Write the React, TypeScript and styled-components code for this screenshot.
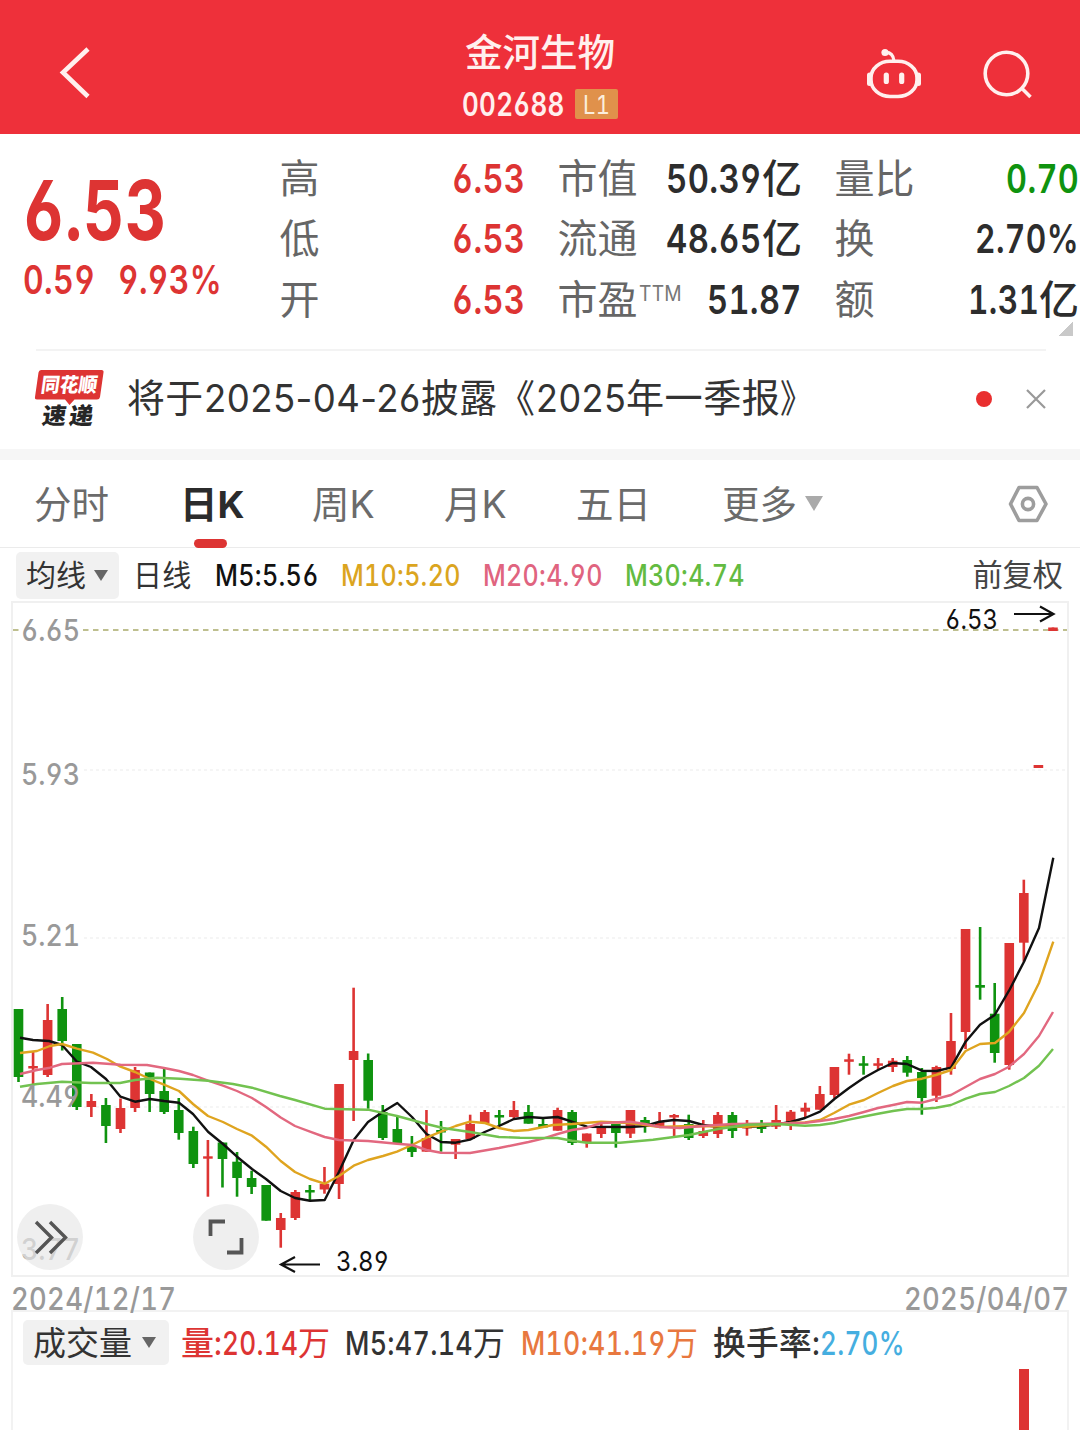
import React, { useLayoutEffect, useRef, useState } from 'react';
import styled, { createGlobalStyle } from 'styled-components';

const FONT = 'Inter, "Noto Sans CJK SC", sans-serif';
const RED = '#dd3433';
const GREEN = '#0f930f';

const Global = createGlobalStyle`
  html, body { margin: 0; padding: 0; background: #fff; }
  body { width: 1080px; height: 1430px; overflow: hidden; }
  * { box-sizing: border-box; }
  #root, button, text {
    font-family: ${FONT};
    font-feature-settings: "cv03", "cv04", "tnum";
  }
`;

/* Text squeezed to the narrow width of a DIN-like face. */
const FitBox = styled.span<{ $w: number; $weight?: number }>`
  display: block;
  flex: none;
  width: ${(p) => p.$w}px;
  white-space: nowrap;
  ${(p) => (p.$weight ? `font-weight: ${p.$weight};` : '')}
`;
const FitText = styled.span`
  display: block;
  width: max-content;
  transform-origin: left center;
  letter-spacing: 0.012em;
`;
function Fit({ w, weight, children }: { w: number; weight?: number; children: string }) {
  const ref = useRef<HTMLSpanElement>(null);
  const [scale, setScale] = useState(1);
  useLayoutEffect(() => {
    if (ref.current) setScale(w / ref.current.offsetWidth);
  }, [w, children]);
  return (
    <FitBox $w={w} $weight={weight}>
      <FitText ref={ref} style={{ transform: `scaleX(${scale})` }}>{children}</FitText>
    </FitBox>
  );
}

type Seg = [string, number, number?];
const Segs = ({ items }: { items: Seg[] }) => (
  <>
    {items.map(([t, w, weight], i) => (
      <Fit key={i} w={w} weight={weight}>{t}</Fit>
    ))}
  </>
);

const Page = styled.div`
  width: 1080px;
  height: 1430px;
  overflow: hidden;
  display: flex;
  flex-direction: column;
  background: #fff;
  color: #333;
`;

/* ---------- header ---------- */
const Header = styled.header`
  flex: none;
  height: 133.5px;
  display: grid;
  grid-template-columns: 300px 1fr 300px;
  background: #ee303a;
  color: #fff0ee;
`;
const HeaderSide = styled.div<{ $end?: boolean }>`
  display: flex;
  align-items: flex-start;
  justify-content: ${(p) => (p.$end ? 'flex-end' : 'flex-start')};
  gap: 56px;
  padding: ${(p) => (p.$end ? '44px 44px 0 0' : '42px 0 0 56px')};
`;
const TitleBlock = styled.div`
  display: flex;
  flex-direction: column;
  align-items: center;
  padding-top: 28px;
`;
const StockName = styled.div`
  font-size: 37.5px;
  line-height: 50px;
  font-weight: 500;
`;
const CodeRow = styled.div`
  display: flex;
  align-items: center;
  gap: 10px;
  height: 52px;
  font-size: 32.5px;
  font-weight: 600;
`;
const LevelBadge = styled.span`
  display: flex;
  align-items: center;
  justify-content: center;
  width: 43px;
  height: 30px;
  border-radius: 2px;
  background: #e0914b;
  color: #fbeedd;
  font-size: 26px;
  font-weight: 400;
`;

/* ---------- quote ---------- */
const Quote = styled.section`
  position: relative;
  flex: none;
  height: 215.5px;
  padding: 15.5px 0 0 23px;
  display: grid;
  grid-template-columns: 224px 246px 245px 245px;
  column-gap: 32px;
`;
const PriceBlock = styled.div`
  display: flex;
  flex-direction: column;
  color: ${RED};
`;
const Price = styled.div`
  padding-top: 21px;
  height: 103px;
  line-height: 82px;
  font-size: 82px;
  font-weight: 700;
`;
const Change = styled.div`
  display: flex;
  gap: 23px;
  height: 56px;
  line-height: 56px;
  font-size: 40px;
  font-weight: 600;
`;
const StatColumn = styled.div`
  display: flex;
  flex-direction: column;
`;
const Stat = styled.div`
  display: flex;
  justify-content: space-between;
  height: 60.3px;
  line-height: 60px;
  font-size: 40px;
`;
const StatLabel = styled.span`
  display: flex;
  padding-left: 0.5px;
  color: #666;
  font-weight: 400;
  line-height: 60px;
`;
const Sup = styled.span`
  font-size: 21px;
  line-height: 47px;
  padding-left: 1px;
  color: #777;
`;
const StatValue = styled.span<{ $c?: string }>`
  display: flex;
  color: ${(p) => p.$c || '#2d2d2d'};
  font-weight: 600;
`;
const Corner = styled.i`
  position: absolute;
  right: 7px;
  bottom: 13px;
  width: 14px;
  height: 14px;
  background: linear-gradient(135deg, transparent 50%, #c9c9c9 50%);
`;

/* ---------- news ---------- */
const News = styled.section`
  flex: none;
  height: 100px;
  margin: 0 34px 0 36px;
  padding-bottom: 3px;
  border-top: 2px solid #f3f3f3;
  display: flex;
  align-items: center;
  font-size: 38.4px;
`;
const LogoWrap = styled.div`
  width: 93px;
  height: 66px;
  margin-left: -2px;
  flex: none;
`;
const NewsText = styled.div`
  flex: 1;
  display: flex;
  line-height: 51px;
  font-feature-settings: "cv03", "cv04";
`;
const Dot = styled.i`
  width: 16px;
  height: 16px;
  border-radius: 50%;
  background: #e92f2f;
  margin-right: 34px;
`;
const Band = styled.div`
  flex: none;
  height: 11px;
  background: #f6f6f6;
`;

/* ---------- tabs ---------- */
const Tabs = styled.nav`
  flex: none;
  height: 88px;
  display: flex;
  align-items: stretch;
  padding: 0 32px 0 34px;
  border-bottom: 1.5px solid #ebebeb;
`;
const Tab = styled.div<{ $w: number; $on?: boolean }>`
  width: ${(p) => p.$w}px;
  display: flex;
  align-items: flex-start;
  gap: 8px;
  font-size: 37.5px;
  line-height: 90px;
  color: ${(p) => (p.$on ? '#2b2b2b' : '#6b6b6b')};
  font-weight: ${(p) => (p.$on ? 700 : 400)};
  position: relative;
`;
const Underline = styled.i`
  position: absolute;
  left: 13.5px;
  bottom: -1px;
  width: 33px;
  height: 9px;
  border-radius: 5px;
  background: ${RED};
`;
const Caret = styled.i<{ $s: number; $h: number; $c: string }>`
  align-self: center;
  width: 0;
  height: 0;
  border: ${(p) => p.$s}px solid transparent;
  border-top: ${(p) => p.$h}px solid ${(p) => p.$c};
  border-bottom: 0;
`;
const Push = styled.div`
  margin-left: auto;
  display: flex;
  align-items: center;
`;

/* ---------- indicator rows ---------- */
const MaRow = styled.div`
  flex: none;
  height: 53px;
  display: flex;
  align-items: center;
  padding: 1px 17px 0 16px;
  font-size: 30px;
`;
const Chip = styled.div<{ $w: number; $h: number; $pr: number }>`
  width: ${(p) => p.$w}px;
  height: ${(p) => p.$h}px;
  flex: none;
  display: flex;
  align-items: center;
  justify-content: space-between;
  padding: 0 ${(p) => p.$pr}px 0 10px;
  border-radius: 5px;
  background: #f1f1f1;
  color: #333;
  font-weight: 400;
`;
const Ma = styled.span<{ $c: string; $ml: number; $weight?: number }>`
  display: flex;
  margin-left: ${(p) => p.$ml}px;
  color: ${(p) => p.$c};
  line-height: 40px;
  font-weight: ${(p) => p.$weight || 550};
`;
const Label = styled.span`
  line-height: 44px;
`;
const Adjust = styled.span`
  margin-left: auto;
  font-size: 30.2px;
  line-height: 44px;
  font-weight: 400;
  color: #444;
`;

/* ---------- chart ---------- */
const ChartArea = styled.section`
  position: relative;
  flex: none;
  height: 676px;
`;
const ChartSvg = styled.svg`
  display: block;
`;
const RoundButton = styled.button<{ $x: number }>`
  position: absolute;
  left: ${(p) => p.$x}px;
  top: 603px;
  width: 66px;
  height: 66px;
  padding: 0;
  border: 0;
  border-radius: 50%;
  background: rgba(232, 232, 232, 0.7);
`;
const Dates = styled.div`
  flex: none;
  height: 33px;
  display: flex;
  justify-content: space-between;
  padding: 0 11px;
  font-size: 31px;
  font-weight: 500;
  line-height: 44px;
  color: #999;
`;
const Volume = styled.section`
  flex: 1;
  margin: 0 11px;
  border: 2px solid #f2f2f2;
  border-bottom: 0;
  display: flex;
  flex-direction: column;
`;
const VolumeRow = styled.div`
  display: flex;
  align-items: center;
  flex: none;
  height: 45px;
  margin-top: 8px;
  padding-left: 10px;
  font-size: 33px;
`;
const VolumeBars = styled.div`
  flex: 1;
  display: flex;
  justify-content: flex-end;
  padding: 4px 38px 0 0;
`;
const VolumeBar = styled.i`
  width: 10px;
  background: ${RED};
`;

/* up?, body top, body bottom, wick top, wick bottom */
type Candle = [0 | 1, number, number, number, number];
const candles: Candle[] = [
  [0, 1009, 1077, 1009, 1082], [1, 1066, 1068.5, 1052, 1085], [1, 1020, 1075, 1004, 1077], [0, 1009, 1041, 997, 1050.5],
  [0, 1044, 1107, 1044, 1110], [1, 1101, 1107, 1094, 1117], [0, 1105, 1126, 1098, 1143], [1, 1108, 1129, 1098.5, 1133],
  [1, 1070, 1108, 1067, 1112], [0, 1072.5, 1094, 1072.5, 1112], [0, 1091, 1112, 1068.5, 1114], [0, 1110, 1133, 1098, 1139.7],
  [0, 1131, 1164, 1126.7, 1168], [1, 1156.3, 1158.7, 1140, 1196.7], [0, 1142.5, 1159, 1142.5, 1187.5], [0, 1161.7, 1178, 1152, 1196.7],
  [0, 1178, 1187, 1170.7, 1194], [0, 1185, 1220.7, 1185, 1220.7], [1, 1218, 1230, 1213, 1247.7], [1, 1192, 1218, 1190, 1220],
  [0, 1190, 1192.5, 1185, 1200], [1, 1183.7, 1189.5, 1167, 1193.7], [1, 1084, 1184, 1084, 1199], [1, 1051, 1060, 987.7, 1121],
  [0, 1060, 1100.7, 1053.5, 1108.7], [0, 1112, 1138, 1105, 1140], [0, 1129, 1144, 1117, 1144], [0, 1145.7, 1152, 1136, 1157],
  [1, 1138, 1151.7, 1110, 1151.7], [0, 1130, 1132.5, 1121, 1151.7], [1, 1139, 1144.7, 1139, 1159], [1, 1124, 1139, 1114.7, 1139],
  [1, 1112, 1123, 1110, 1123], [0, 1115, 1117.5, 1110, 1125], [1, 1110, 1117, 1101, 1119], [0, 1112, 1123.7, 1105, 1123.7],
  [0, 1124, 1127.5, 1118, 1127.5], [1, 1110, 1130.7, 1107.7, 1130.7], [0, 1112, 1143, 1110, 1145], [1, 1133.5, 1143, 1133.5, 1147.7],
  [1, 1126.7, 1134, 1122, 1138], [0, 1124, 1133, 1124, 1147.7], [1, 1110, 1133.7, 1110, 1138], [0, 1120, 1126.7, 1117, 1132.7],
  [1, 1122, 1127, 1112, 1128], [1, 1115, 1117.5, 1114, 1136], [0, 1124, 1138, 1114.7, 1140], [1, 1131, 1136, 1120, 1138],
  [1, 1115, 1134, 1112, 1138], [0, 1115, 1131, 1112, 1138], [1, 1126, 1128.5, 1120, 1135.7], [0, 1124, 1129, 1120, 1133],
  [1, 1120, 1126.7, 1105, 1129], [1, 1111.7, 1124, 1110, 1130], [1, 1107.7, 1111.7, 1102.7, 1117.7], [1, 1094, 1109.7, 1086, 1109.7],
  [1, 1067, 1095, 1067, 1098], [1, 1059.3, 1061.8, 1053.7, 1074.7], [0, 1063.3, 1065.8, 1056, 1074.7], [1, 1063.3, 1065.8, 1058, 1069.7],
  [1, 1060.7, 1067, 1058, 1072], [0, 1060, 1072.7, 1056, 1076.7], [0, 1072, 1098, 1068, 1114.7], [1, 1067, 1095.7, 1065.7, 1102],
  [1, 1041, 1069, 1013, 1074.7], [1, 929, 1032, 929, 1049], [0, 985, 987.7, 927, 999.7], [0, 1013.7, 1053, 983, 1062.7],
  [1, 943, 1065, 943, 1069.7], [1, 893, 942.7, 879.7, 961.7], [1, 765, 768, 765, 768], [1, 627.5, 631, 627.5, 631],
];

const MA5 = '20,1037.7 33,1040 49,1041 62,1045 77,1061.7 91,1067 106,1079 120.5,1096.7 135,1101.7 150,1099 164,1101 179,1102.7 193,1114 208,1131.7 223,1144 237,1156.7 252,1169 266,1179 280.7,1191 295,1198 310,1200.7 324.7,1200 339,1171.7 353.7,1140 368,1122 383,1111.7 397.3,1103 412,1117 426.5,1134 441,1142 455.6,1142.7 470,1139.7 484.7,1132 499,1126 514,1119 528.5,1117 543,1118 557.6,1117 572,1121.7 587,1126.7 630,1127 645,1126 659.6,1121.7 674,1120 689,1121 703,1125 718,1126.7 732,1126 747,1127 761.6,1126 776,1124.5 790.7,1122 805,1118 820,1111.7 834.4,1099 849,1088 863.6,1078 878,1070 892.7,1063 907,1064 922,1070.7 936.4,1071 951,1067.7 965.6,1041.7 980,1024.7 994.7,1015 1009,990.7 1024,961.7 1039,928 1053.3,857.7';
const MA10 = '20,1053 37,1051 50,1046 62,1044 77,1048.7 93,1052.7 107,1059 120.5,1066.7 135,1072 150,1079 164,1084.7 179,1091 193,1104 208,1116 223,1122 237,1129 252,1135.7 266,1146.7 280.7,1161 295,1172 310,1179 324.7,1183.7 339,1176 353.7,1165.7 368,1160 383,1156 397,1151.7 412,1145 426.5,1137.7 441,1131.7 455.6,1126 470,1121.7 485,1123 499,1128 514,1131 528.5,1130 553,1125 572,1124 601,1121.7 630,1123 660,1127 689,1126 747,1126.7 791,1123 805,1122.5 820,1120 834,1113 849,1104.7 864,1100 878,1093 893,1086 907,1081 922,1078.7 936,1075 951,1070 965.6,1051 980,1044 995,1043 1009,1032 1024,1013 1039,983 1053.3,941.7';
const MA20 = '20,1074 37,1070 50,1067.7 62,1064 93,1062.7 120.5,1064.7 147,1065 164,1068 179,1071 193,1075 208,1080.7 223,1085.7 237,1091 252,1098 266,1107 280.7,1117.5 295,1126 310,1131.7 324.7,1137 339,1140 368,1141 397,1143.7 412,1145 426.5,1150 441,1152.7 470,1153 499,1148 528.5,1142 543,1138.7 557.6,1134 572,1130 587,1127.7 601,1123 630,1121.7 645,1124 660,1127 680,1128 703,1126 732,1124 780,1123.5 805,1122.7 820,1121 834,1119 849,1116 864,1112 878,1108 893,1105 907,1102 922,1102.7 936,1099 951,1095 966,1086.7 980,1079 995,1074 1009,1066.7 1024,1054 1039,1036 1053,1012';
const MA30 = '20,1086.7 37,1084 62,1081.7 91,1083 120,1083 135,1080 157,1077.7 180,1078.7 208,1080.7 233,1084 252,1087.7 280,1096 295,1100 324.7,1108.7 368,1109.7 397,1116 426.5,1124 443,1128 470,1132 499,1137 520,1137.7 557.6,1138 572,1140.7 587,1142.7 620,1142.7 653,1139.7 689,1135 718,1129 747,1124.7 776,1124 805,1125.7 820,1125 834,1123 849,1119.7 864,1116.5 878,1113.7 893,1111 907,1109 922,1109 936,1107.7 951,1105 966,1098.7 980,1094 995,1092 1009,1086 1024,1078 1039,1065.7 1053,1049';

const axis: [string, number][] = [['6.65', 629.5], ['5.93', 774], ['5.21', 935], ['4.49', 1096], ['3.77', 1249]];

function KChart() {
  return (
    <ChartSvg width="1080" height="676" viewBox="0 601 1080 676">
      <rect x="12" y="602" width="1056" height="674" fill="none" stroke="#f0f0f0" strokeWidth="2" />
      {[770, 938, 1107].map((y) => (
        <line key={y} x1="84" x2="1067" y1={y} y2={y} stroke="#ececec" strokeWidth="1.2" strokeDasharray="3 3" />
      ))}
      <line x1="13" x2="1067" y1="630" y2="630" stroke="#a9aa6b" strokeWidth="1.4" strokeDasharray="5.5 4.5" />
      {candles.map(([up, bt, bb, wt, wb], i) => {
        const x = 18.5 + i * 14.57;
        const c = up ? RED : GREEN;
        return (
          <g key={i} fill={c}>
            <rect x={x - 1.3} y={wt} width="2.6" height={wb - wt} />
            <rect x={x - 4.8} y={bt} width="9.6" height={bb - bt} />
          </g>
        );
      })}
      <g fill="none" strokeWidth="2.4" strokeLinejoin="round">
        <polyline points={MA5} stroke="#111" />
        <polyline points={MA10} stroke="#dfa41f" />
        <polyline points={MA20} stroke="#e2687f" />
        <polyline points={MA30} stroke="#72c250" />
      </g>
      {axis.map(([t, y]) => (
        <g key={t}>
          {t === '6.65' && <rect x="22" y="616" width="59" height="28" fill="#fff" />}
          <text x="21" y={y + 11} fontSize="30" fontWeight="500" fill="#999" textLength="59" lengthAdjust="spacingAndGlyphs">{t}</text>
        </g>
      ))}
      <g fontSize="27" fontWeight="400" fill="#111">
        <text x="945" y="629" textLength="53" lengthAdjust="spacingAndGlyphs">6.53</text>
        <text x="336" y="1271" textLength="53" lengthAdjust="spacingAndGlyphs">3.89</text>
      </g>
      <g fill="none" stroke="#111" strokeWidth="2.2">
        <path d="M1014 614H1053M1040 606.5L1053.5 614L1040 621.5" />
        <path d="M320 1264.500H281.500M295 1257L281 1264.500L295 1272" />
      </g>
    </ChartSvg>
  );
}

const Logo = () => (
  <svg width="80" height="66" viewBox="34 366 80 66">
    <path d="M41 370H101.500Q104 370 103.500 372.500L100 397Q99.500 399.500 97 399.500H74.500L69.500 405L65 399.500H37Q34.500 399.500 35 397L38.500 372.500Q39 370 41 370Z" fill={RED} />
    <g fontWeight="900" transform="skewX(-8)">
      <text x="95.500" y="392.500" fontSize="20" fill="#fff" textLength="56" lengthAdjust="spacingAndGlyphs">同花顺</text>
      <text x="101" y="424.500" fontSize="23" fill="#262626" textLength="24" lengthAdjust="spacingAndGlyphs">速</text>
      <text x="128" y="424.500" fontSize="23" fill="#262626" textLength="24" lengthAdjust="spacingAndGlyphs">递</text>
    </g>
  </svg>
);

export default function App() {
  return (
    <>
      <Global />
      <Page>
        <Header>
          <HeaderSide>
            <svg width="40" height="62" viewBox="56 42 40 62" fill="none" stroke="currentColor" strokeWidth="4.6">
              <path d="M88 49L63 72.500L88 96.500" />
            </svg>
          </HeaderSide>
          <TitleBlock>
            <StockName>金河生物</StockName>
            <CodeRow>
              <Fit w={103}>002688</Fit>
              <LevelBadge><Fit w={27}>L1</Fit></LevelBadge>
            </CodeRow>
          </TitleBlock>
          <HeaderSide $end>
            <svg width="60" height="60" viewBox="864 44 60 60" fill="none" stroke="currentColor" strokeWidth="3.6">
              <rect x="871" y="61.300" width="46" height="35.200" rx="19" ry="16.500" />
              <path d="M869.500 75V83.500M918.500 75V83.500" strokeWidth="5" strokeLinecap="round" />
              <path d="M885 52.500Q893 52 894 61" strokeWidth="3.200" />
              <circle cx="885" cy="52.500" r="3.600" fill="currentColor" stroke="none" />
              <path d="M886.300 75V81.500M901.700 75V81.500" strokeWidth="5.200" strokeLinecap="round" />
            </svg>
            <svg width="56" height="60" viewBox="980 44 56 60" fill="none" stroke="currentColor" strokeWidth="3.6">
              <circle cx="1006.500" cy="73.500" r="21.300" />
              <path d="M1022 88.500L1030.500 97" />
            </svg>
          </HeaderSide>
        </Header>

        <Quote>
          <PriceBlock>
            <Price><Fit w={144}>6.53</Fit></Price>
            <Change><Fit w={72}>0.59</Fit><Fit w={104}>9.93%</Fit></Change>
          </PriceBlock>
          <StatColumn>
            {['高', '低', '开'].map((l) => (
              <Stat key={l}>
                <StatLabel>{l}</StatLabel>
                <StatValue $c={RED}><Fit w={73}>6.53</Fit></StatValue>
              </Stat>
            ))}
          </StatColumn>
          <StatColumn>
            <Stat><StatLabel>市值</StatLabel><StatValue><Segs items={[['50.39', 96], ['亿', 40, 500]]} /></StatValue></Stat>
            <Stat><StatLabel>流通</StatLabel><StatValue><Segs items={[['48.65', 96], ['亿', 40, 500]]} /></StatValue></Stat>
            <Stat><StatLabel>市盈<Sup><Fit w={43}>TTM</Fit></Sup></StatLabel><StatValue><Fit w={95}>51.87</Fit></StatValue></Stat>
          </StatColumn>
          <StatColumn>
            <Stat><StatLabel>量比</StatLabel><StatValue $c={GREEN}><Fit w={73}>0.70</Fit></StatValue></Stat>
            <Stat><StatLabel>换</StatLabel><StatValue><Fit w={104}>2.70%</Fit></StatValue></Stat>
            <Stat><StatLabel>额</StatLabel><StatValue><Segs items={[['1.31', 71], ['亿', 40, 500]]} /></StatValue></Stat>
          </StatColumn>
          <Corner />
        </Quote>

        <News>
          <LogoWrap><Logo /></LogoWrap>
          <NewsText>
            <Segs items={[['将于', 77], ['2025-04-26', 217], ['披露《', 115], ['2025', 90], ['年一季报', 154], ['》', 33]]} />
          </NewsText>
          <Dot />
          <svg width="20" height="20" viewBox="0 0 20 20" stroke="#999" strokeWidth="2.2">
            <path d="M1 1L19 19M19 1L1 19" />
          </svg>
        </News>
        <Band />

        <Tabs>
          <Tab $w={146}>分时</Tab>
          <Tab $w={132} $on>日K<Underline /></Tab>
          <Tab $w={132}>周K</Tab>
          <Tab $w={132}>月K</Tab>
          <Tab $w={146}>五日</Tab>
          <Tab $w={120}>更多<Caret $s={9} $h={15} $c="#aaa" /></Tab>
          <Push>
            <svg width="40" height="40" viewBox="1007.500 484 40 40" fill="none" stroke="#9d9d9d" strokeWidth="3.6">
              <path d="M1018.500 487.500H1036.500L1045.500 504L1036.500 520.500H1018.500L1010 504Z" strokeLinejoin="round" />
              <circle cx="1027.500" cy="504" r="5.600" />
            </svg>
          </Push>
        </Tabs>

        <MaRow>
          <Chip $w={103} $h={47} $pr={11}><Label>均线</Label><Caret $s={7.5} $h={11} $c="#666" /></Chip>
          <Ma $c="#333" $ml={14} $weight={400}><Fit w={59}>日线</Fit></Ma>
          <Ma $c="#111" $ml={23}><Fit w={104}>M5:5.56</Fit></Ma>
          <Ma $c="#dba51f" $ml={22}><Fit w={120}>M10:5.20</Fit></Ma>
          <Ma $c="#e0647f" $ml={22}><Fit w={120}>M20:4.90</Fit></Ma>
          <Ma $c="#63bb41" $ml={22}><Fit w={120}>M30:4.74</Fit></Ma>
          <Adjust>前复权</Adjust>
        </MaRow>

        <ChartArea>
          <KChart />
          <RoundButton $x={17} aria-label="expand">
            <svg width="66" height="66" viewBox="17 1204 66 66" fill="none" stroke="#555" strokeWidth="3.4">
              <path d="M36 1222L51.500 1237.500L36 1253M50 1222L65.500 1237.500L50 1253" />
            </svg>
          </RoundButton>
          <RoundButton $x={192.5} aria-label="fullscreen">
            <svg width="66" height="66" viewBox="192.500 1204 66 66" fill="none" stroke="#555" strokeWidth="3.8">
              <path d="M210 1236V1221.500H224.500M241 1238V1252.500H226.500" />
            </svg>
          </RoundButton>
        </ChartArea>

        <Dates>
          <Fit w={165}>2024/12/17</Fit>
          <Fit w={165}>2025/04/07</Fit>
        </Dates>

        <Volume>
          <VolumeRow>
            <Chip $w={146} $h={45} $pr={13}><Label>成交量</Label><Caret $s={7.5} $h={11} $c="#666" /></Chip>
            <Ma $c={RED} $ml={12}><Segs items={[['量', 33, 500], [':', 8], ['20.14', 76], ['万', 32, 400]]} /></Ma>
            <Ma $c="#333" $ml={15}><Segs items={[['M5:47.14', 128], ['万', 32, 400]]} /></Ma>
            <Ma $c="#e8783f" $ml={16}><Segs items={[['M10:41.19', 145], ['万', 32, 400]]} /></Ma>
            <Ma $c="#333" $ml={15}><Segs items={[['换手率', 99, 500], [':', 8]]} /></Ma>
            <Ma $c="#45aee0" $ml={0}><Fit w={85}>2.70%</Fit></Ma>
          </VolumeRow>
          <VolumeBars><VolumeBar /></VolumeBars>
        </Volume>
      </Page>
    </>
  );
}
